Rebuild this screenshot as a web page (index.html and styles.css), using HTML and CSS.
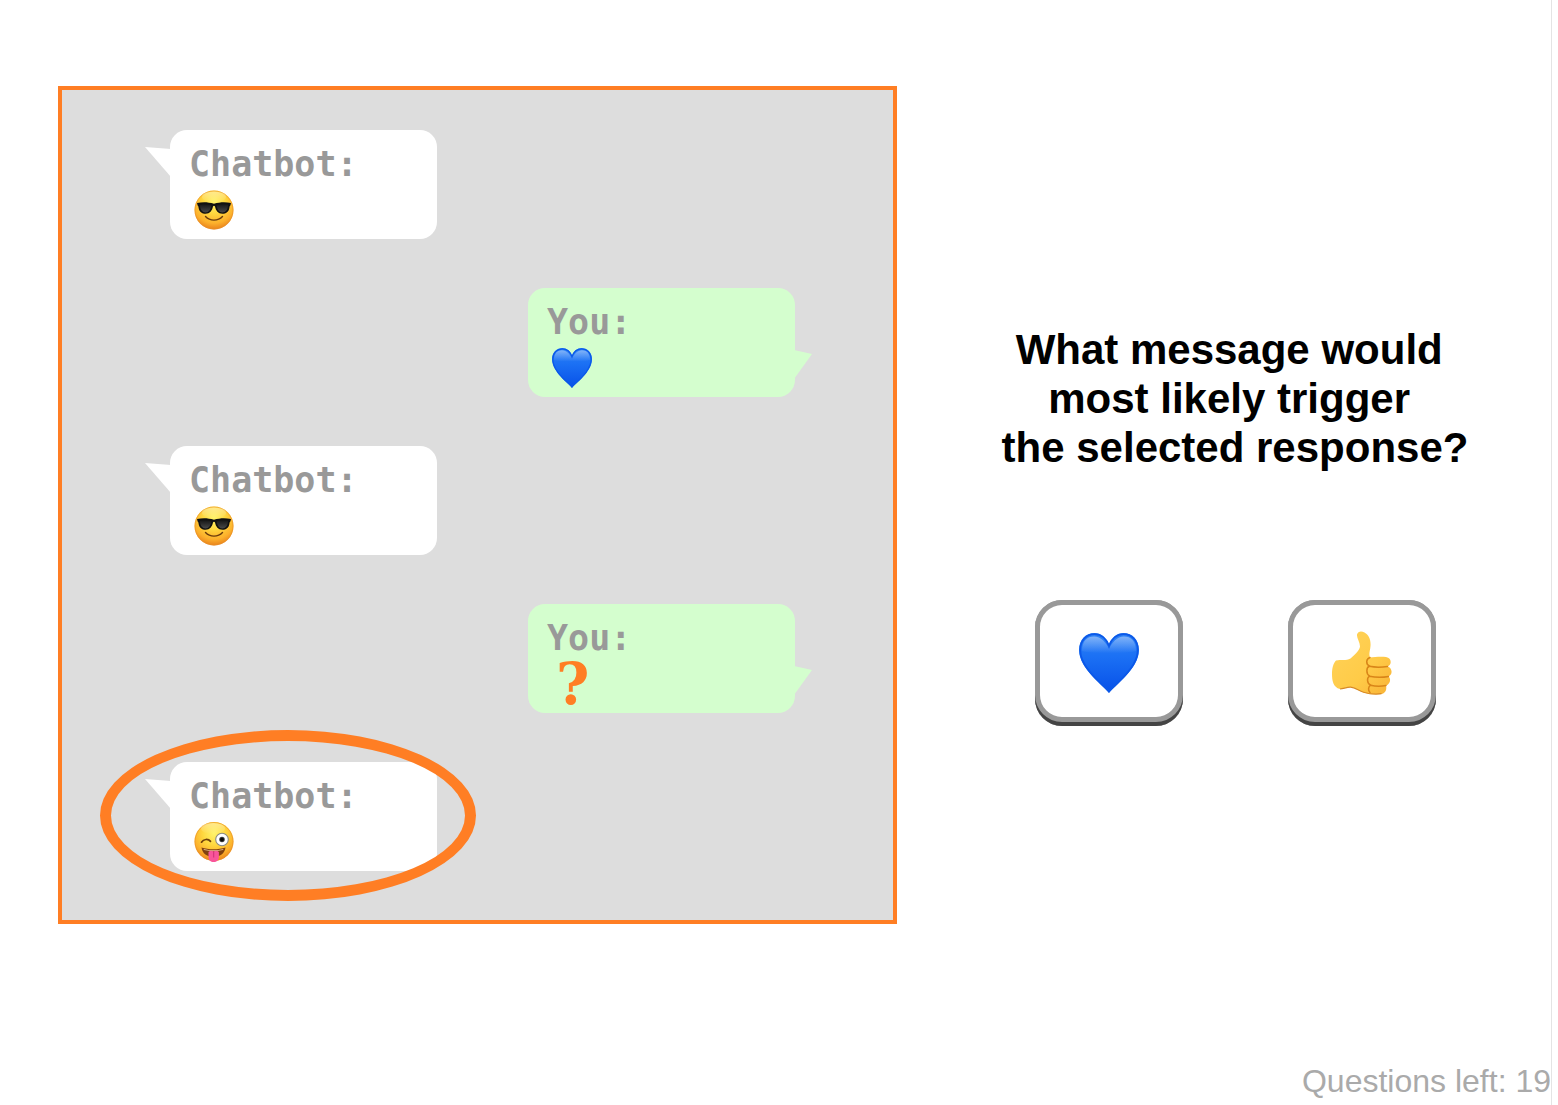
FILE: index.html
```html
<!DOCTYPE html>
<html lang="en">
<head>
<meta charset="utf-8">
<meta name="viewport" content="width=device-width, initial-scale=1">
<title>Chatbot quiz</title>
<link rel="stylesheet" href="styles.css">
</head>
<body>
<svg class="defs" aria-hidden="true">
  <defs>
    <radialGradient id="face" cx=".5" cy=".3" r=".72">
      <stop offset="0" stop-color="#fff36a"/>
      <stop offset=".4" stop-color="#ffd83f"/>
      <stop offset=".75" stop-color="#fcb02c"/>
      <stop offset="1" stop-color="#e67c1a"/>
    </radialGradient>
    <linearGradient id="shine" x2="0" y2="1">
      <stop offset="0" stop-color="#fff" stop-opacity=".4"/>
      <stop offset="1" stop-color="#fff" stop-opacity="0"/>
    </linearGradient>
    <linearGradient id="lens" x2="0" y2="1">
      <stop offset="0" stop-color="#171717"/>
      <stop offset="1" stop-color="#484848"/>
    </linearGradient>
    <linearGradient id="blue" x2="0" y2="1">
      <stop offset="0" stop-color="#2f83f5"/>
      <stop offset=".4" stop-color="#1b70f4"/>
      <stop offset="1" stop-color="#0750e8"/>
    </linearGradient>
    <linearGradient id="hand" x1="0" y1="0" x2="1" y2="1">
      <stop offset="0" stop-color="#ffd35a"/>
      <stop offset=".6" stop-color="#ffcb48"/>
      <stop offset="1" stop-color="#f8b236"/>
    </linearGradient>
    <symbol id="cool" viewBox="0 0 40 40">
      <circle cx="20" cy="20" r="19.500" fill="url(#face)"/>
      <circle cx="20" cy="20" r="19" fill="none" stroke="#e8912a" stroke-opacity=".6"/>
      <ellipse cx="20" cy="7" rx="12" ry="5.500" fill="url(#shine)"/>
      <path d="M3 13c6-1.200 11-1 17 .8 6-1.800 11-2 17-.8l-.6 2.500c-.7.400-.8 1-1 2.200-.6 4-3.400 6-7 6-4.300 0-6.500-3-7.400-7.200-.3-1-1.700-1-2 0-.9 4.200-3.100 7.200-7.400 7.200-3.600 0-6.400-2-7-6-.2-1.200-.3-1.800-1-2.200z" fill="#111"/>
      <path d="M6 14.800c4-.8 8-.6 11.300.6-.6 4-2.300 7-5.700 7-3.300 0-5.600-2.500-5.600-7.600zM34 14.800c-4-.8-8-.6-11.300.6.6 4 2.300 7 5.700 7 3.300 0 5.600-2.500 5.600-7.600z" fill="url(#lens)"/>
      <path d="M11.500 26.500c4.500 4.800 12.500 4.800 17 0" fill="none" stroke="#6b3b0c" stroke-width="1.400" stroke-linecap="round"/>
    </symbol>
    <symbol id="wink" viewBox="0 0 40 40">
      <circle cx="20" cy="19.500" r="19.500" fill="url(#face)"/>
      <circle cx="20" cy="19.500" r="19" fill="none" stroke="#e8912a" stroke-opacity=".6"/>
      <ellipse cx="19" cy="6.500" rx="12" ry="5.500" fill="url(#shine)"/>
      <path d="M7.500 20.200c2-3.400 6.800-3.600 9-.8" fill="none" stroke="#70410b" stroke-width="1.700" stroke-linecap="round"/>
      <circle cx="28" cy="17.500" r="6.300" fill="#fff" stroke="#8b8b82" stroke-width="1.100"/>
      <circle cx="28" cy="17.500" r="2.800" fill="#4a4f50"/>
      <circle cx="28" cy="17.500" r="2" fill="#0b0b0b"/>
      <path d="M7.500 25.500c7 2.400 17 2.400 24 0-.8 6-5.500 9.500-12 9.500s-11.200-3.500-12-9.500z" fill="#81410f"/>
      <path d="M9.500 27c7 1.600 13 1.600 20 0l-.5 1c-6 1.200-13 1.200-19 0z" fill="#e6c294"/>
      <path d="M14.500 30c1.700-1.600 3.600-1.600 5.200-.4 1.600-1.200 3.500-1.200 5.200.4v4.500c0 3.600-2 5.500-5.200 5.500s-5.200-1.900-5.200-5.500z" fill="#f8559a"/>
      <path d="M19.700 30v5.500" stroke="#cf2f75" stroke-width="1"/>
    </symbol>
    <symbol id="heart" viewBox="0 0 60 60">
      <path d="M30 60C25 53 0 36 0 17 0 6.500 7 0 15.500 0 22 0 27.500 4.500 30 11 32.500 4.500 38 0 44.500 0 53 0 60 6.500 60 17c0 19-25 36-30 43z" fill="url(#blue)"/>
      <path d="M3 18C3 8 8 3.500 15 3.500s12 6 15 12.500C33 9.500 38 3.500 45 3.500S57 8 57 18c-9 3-45 3-54 0z" fill="url(#shine)"/>
      <path d="M30 58.500C25 52 1.200 35.500 1.200 17 1.200 7 7.500 1.200 15.500 1.200 22 1.200 27.500 6 30 13 32.500 6 38 1.200 44.500 1.200c8 0 14.300 5.800 14.300 15.800 0 18.500-23.800 35-28.800 41.500z" fill="none" stroke="#0b58e8" stroke-width="1.800"/>
    </symbol>
    <symbol id="thumb" viewBox="0 0 60 64">
      <path d="M4 29.500C9 28.300 14 30 18.500 27.500 23 23.500 27.500 19.500 28 15.500 28 11 24.500 7 25 3.500 26 0 29.500-.3 32.500 1.500 37 4 39 9 38.500 15c-.4 5-2 8-.5 11.500C42 26 49 25.500 54 26c6 .8 6 8 1.500 9.500 5 1.500 5.500 8 1 10 3 2.500 1.500 8-2.500 9 1 4-.5 8-4.500 8.500-6 .8-13 .3-18-1.500-5-1.500-8-5-12.500-5.500-4 0-6.500 1.500-11 2C1 56.500 0 49 0 43c0-5 1-10.500 4-13.500z" fill="url(#hand)"/>
      <path d="M38 26.500c-4 1-4.500 7-.5 8.500-3.500 1.500-3.500 8 0 10-3 2-2.500 7.500 1 9-2.500 2-2.500 5.500-.5 7.500M37.500 35.300c6 1.200 12 1 18 .2M37.500 45.200c6 1.400 13 1.400 19 .3M38.500 54.300c5 1.200 11 1.200 15.500.2" fill="none" stroke="#d98518" stroke-width="1.500" stroke-linecap="round"/>
      <path d="M8 58c4-.5 7-1.900 10.500-1.800 5 .5 8 3.500 13 5s12 2.300 18 1.500" fill="none" stroke="#d88a26" stroke-width="1.200"/>
    </symbol>
  </defs>
</svg>
<div class="page">
  <main class="quiz">
    <section class="chat" aria-label="Conversation">
      <article class="bubble bot">
        <span class="name">Chatbot:</span>
        <svg class="emoji" role="img" aria-label="Sunglasses face"><use href="#cool"/></svg>
      </article>
      <article class="bubble you">
        <span class="name">You:</span>
        <svg class="emoji" role="img" aria-label="Blue heart"><use href="#heart"/></svg>
      </article>
      <article class="bubble bot">
        <span class="name">Chatbot:</span>
        <svg class="emoji" role="img" aria-label="Sunglasses face"><use href="#cool"/></svg>
      </article>
      <article class="bubble you">
        <span class="name">You:</span>
        <span class="unknown">?</span>
      </article>
      <article class="bubble bot selected">
        <span class="name">Chatbot:</span>
        <svg class="emoji" role="img" aria-label="Winking face with tongue"><use href="#wink"/></svg>
      </article>
    </section>
    <section class="question">
      <h1 class="prompt">What message would 
most likely trigger 
the selected response?</h1>
      <div class="answers">
        <button class="answer" type="button" aria-label="Blue heart"><svg class="choice heart"><use href="#heart"/></svg></button>
        <button class="answer" type="button" aria-label="Thumbs up"><svg class="choice"><use href="#thumb"/></svg></button>
      </div>
    </section>
  </main>
  <footer class="status">Questions left: 19</footer>
</div>
</body>
</html>
```
FILE: styles.css
```css
* {
  box-sizing: border-box;
}

body {
  margin: 0;
  background: #fff;
  font-family: "Liberation Sans", Arial, sans-serif;
}

.defs {
  position: absolute;
  width: 0;
  height: 0;
}

.page {
  display: flex;
  flex-direction: column;
  min-height: 100vh;
  margin-right: 6px;
  border-right: 1px solid #e4e4e4;
}

.quiz {
  display: grid;
  grid-template-columns: 839fr 632fr;
  gap: 22px;
  align-items: start;
  padding: 86px 0 40px 58px;
}

.chat {
  display: flex;
  flex-direction: column;
  gap: 49px;
  padding: 40px 98px 49px 108px;
  border: 4px solid #ff7e24;
  background: #ddd;
}

.bubble {
  position: relative;
  display: flex;
  flex-direction: column;
  gap: 4px;
  width: 267px;
  padding: 12px 19px 9px;
  border-radius: 17px;
}

.bot {
  align-self: flex-start;
  background: #fff;
}

.you {
  align-self: flex-end;
  background: #d4fece;
}

.bot::before,
.you::before {
  content: "";
  position: absolute;
}

.bot::before {
  top: 17px;
  left: -25px;
  width: 26px;
  height: 30px;
  background: #fff;
  clip-path: polygon(0 0, 100% 2px, 100% 100%);
}

.you::before {
  top: 62px;
  right: -17px;
  width: 18px;
  height: 29px;
  background: #d4fece;
  clip-path: polygon(0 0, 100% 4px, 0 100%);
}

.selected::after {
  content: "";
  position: absolute;
  inset: -32px -39px -30px -70px;
  border: 11px solid #ff7e24;
  border-radius: 50%;
}

.name {
  color: #999;
  font: bold 35px/44px "DejaVu Sans Mono", monospace;
}

.emoji {
  width: 40px;
  height: 40px;
  margin-left: 5px;
}

.unknown {
  margin-left: 9px;
  color: #ff7e24;
  font: bold 57px/40px "DejaVu Serif", serif;
}

.question {
  display: flex;
  flex-direction: column;
  align-items: center;
  gap: 128px;
  padding-top: 239px;
}

.prompt {
  margin: 0;
  color: #000;
  font-size: 42px;
  line-height: 49px;
  text-align: center;
  white-space: pre;
}

.answers {
  display: flex;
  gap: 105px;
}

.answer {
  display: flex;
  align-items: center;
  justify-content: center;
  width: 148px;
  height: 126px;
  padding: 0;
  border: 0;
  border-radius: 27px;
  background: #fff;
  box-shadow:
    inset 0 -4px 0 #444,
    inset 0 0 0 5px #999,
    inset 0 -4px 0 5px #999;
  cursor: pointer;
}

.choice {
  width: 60px;
  height: 64px;
}

.status {
  margin-top: auto;
  padding-bottom: 6px;
  color: #aaa;
  font-size: 32px;
  line-height: 36px;
  text-align: right;
}
```
